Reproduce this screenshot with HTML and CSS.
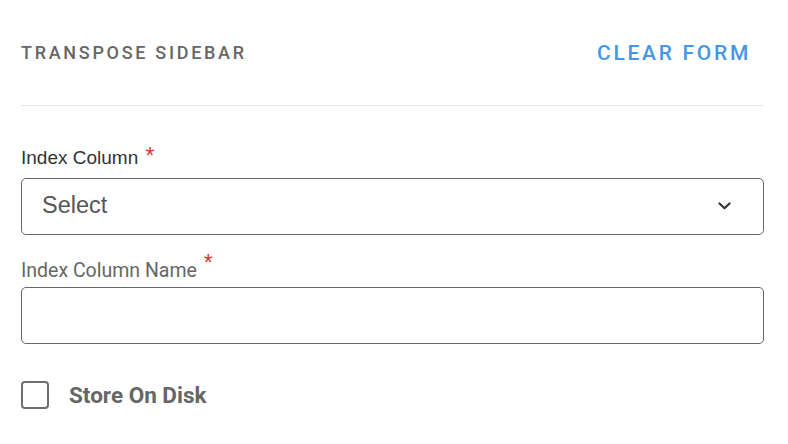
FILE: index.html
```html
<!DOCTYPE html>
<html>
<head>
<meta charset="utf-8">
<link rel="stylesheet" href="styles.css">
</head>
<body>
<div class="sidebar">
  <div class="header">
    <div class="title">TRANSPOSE SIDEBAR</div>
    <button class="clear">CLEAR FORM</button>
  </div>
  <div class="field first">
    <label class="label dark">Index Column <span class="req">*</span></label>
    <div class="select">
      <span class="placeholder">Select</span>
      <svg class="chev" width="13" height="8" viewBox="0 0 13 8"><path d="M1.5 1.5 L6.5 6.3 L11.5 1.5" fill="none" stroke="#333" stroke-width="2.2" stroke-linecap="round" stroke-linejoin="round"/></svg>
    </div>
  </div>
  <div class="field second">
    <label class="label gray">Index Column Name <span class="req up">*</span></label>
    <div class="input"></div>
  </div>
  <div class="check">
    <span class="box"></span>
    <span class="check-label">Store On Disk</span>
  </div>
</div>
</body>
</html>
```
FILE: styles.css
```css
html, body {
  margin: 0;
  padding: 0;
  background: #ffffff;
}
.sidebar {
  padding: 0 24px 0 21px;
  font-family: Roboto, "Liberation Sans", sans-serif;
}
.header {
  height: 106px;
  box-sizing: border-box;
  border-bottom: 1px solid #e6e6e6;
  display: flex;
  align-items: center;
  justify-content: space-between;
}
.title {
  font-size: 18px;
  font-weight: 500;
  letter-spacing: 2.7px;
  color: #666666;
}
.clear {
  border: none;
  background: none;
  font-family: Roboto, "Liberation Sans", sans-serif;
  font-size: 21px;
  font-weight: 500;
  letter-spacing: 2.7px;
  color: #4596e6;
  padding: 0 13px 0 0;
  cursor: pointer;
}
.field {
  display: flex;
  flex-direction: column;
}
.field.first {
  margin-top: 40px;
}
.field.second {
  margin-top: 24px;
}
.label {
  line-height: 24px;
  display: block;
}
.label.dark {
  font-size: 19px;
  color: #333333;
  font-family: "Liberation Sans", Arial, sans-serif;
  margin-bottom: 8px;
}
.label.gray {
  font-size: 19.5px;
  color: #666666;
  margin-bottom: 4px;
}
.req {
  color: #d93a2e;
  font-family: "Liberation Sans", Arial, sans-serif;
  font-size: 23px;
  line-height: 0;
  margin-left: 2px;
}
.req.up {
  position: relative;
  top: -6px;
}
.select, .input {
  height: 57px;
  box-sizing: border-box;
  border: 1px solid #666666;
  border-radius: 5px;
}
.select {
  display: flex;
  align-items: center;
  justify-content: space-between;
  padding: 0 32px 0 20px;
}
.placeholder {
  font-family: "Liberation Sans", Arial, sans-serif;
  font-size: 23.5px;
  color: #555555;
  margin-top: -3px;
}
.chev {
  display: block;
  margin-top: -2px;
}
.check {
  margin-top: 37px;
  display: flex;
  align-items: center;
  gap: 20px;
}
.box {
  width: 28px;
  height: 28px;
  box-sizing: border-box;
  border: 2.5px solid #6e6e6e;
  border-radius: 4px;
}
.check-label {
  font-size: 22.5px;
  font-weight: 700;
  color: #666666;
}
```
